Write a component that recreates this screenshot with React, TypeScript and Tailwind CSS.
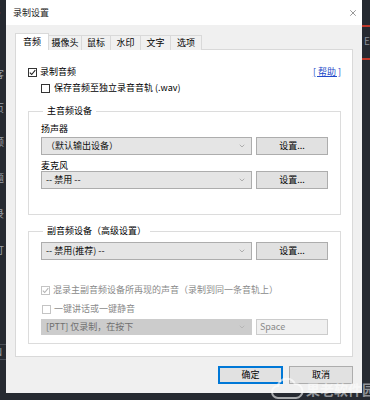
import { ChevronDown, X } from "lucide-react";

const tabs = [
  { label: "音频", w: "w-[34px]" },
  { label: "摄像头", w: "w-[34px]" },
  { label: "鼠标", w: "w-[30px]" },
  { label: "水印", w: "w-[31px]" },
  { label: "文字", w: "w-[31px]" },
  { label: "选项", w: "w-[32px]" },
];

const CheckBox = ({ checked, disabled }: { checked?: boolean; disabled?: boolean }) => (
  <span
    className={`flex h-[9px] w-[9px] shrink-0 items-center justify-center border bg-white ${
      disabled ? "border-[#c4c4c4]" : "border-[#333333]"
    }`}
  >
    {checked && (
      <svg width="7" height="7" viewBox="0 0 7 7">
        <path
          d="M0.8 3.6 L2.7 5.5 L6.3 1.2"
          fill="none"
          stroke={disabled ? "#b5b5b5" : "#222222"}
          strokeWidth="1.1"
        />
      </svg>
    )}
  </span>
);

const Select = ({ value, disabled }: { value: string; disabled?: boolean }) => (
  <div
    className={`flex w-[211px] items-center justify-between border pl-[4px] pr-[5px] ${
      disabled
        ? "h-[16px] border-[#cccccc] bg-[#cccccc] text-[#6f6f6f]"
        : "h-[18px] border-[#adadad] bg-[#e5e5e5] text-[#111]"
    }`}
  >
    <span>{value}</span>
    <ChevronDown size={8} strokeWidth={1.5} className={disabled ? "text-[#a0a0a0]" : "text-[#777]"} />
  </div>
);

const SetButton = () => (
  <div className="flex h-[18px] w-[72px] items-center justify-center border border-[#adadad] bg-[#e1e1e1]">
    设置...
  </div>
);

export default function App() {
  return (
    <div className="flex h-[400px] w-[370px] overflow-hidden bg-[#262a31] font-['Noto_Sans_CJK_SC','Microsoft_YaHei',sans-serif] text-[9px] leading-[12px] text-black">
      {/* left strip of the app behind */}
      <div className="flex w-[6px] shrink-0 flex-col overflow-hidden text-[10px] text-[#9aa0a8]">
        <span className="mt-[4px] -ml-[6px] text-[#d23a3a]">C</span>
        <span className="mt-[52px] -ml-[6px]">客</span>
        <span className="mt-[22px] -ml-[6px]">页</span>
        <span className="mt-[22px] -ml-[6px]">频</span>
        <span className="mt-[24px] -ml-[6px]">题</span>
        <span className="mt-[24px] -ml-[6px]">录</span>
        <span className="mt-[24px] -ml-[6px]">打</span>
        <div className="mt-[88px] h-px w-full bg-[#4a4f57]" />
        <span className="mt-[1px] -ml-[5px]">N</span>
        <div className="mt-[1px] h-px w-full bg-[#4a4f57]" />
      </div>

      {/* dialog */}
      <div className="relative flex h-[393px] w-[356px] shrink-0 flex-col bg-[#f0f0f0]">
        <div className="flex h-[25px] items-center justify-between bg-white pl-[7px] pr-[4px]">
          <span className="text-[#222]">录制设置</span>
          <X size={10} strokeWidth={1.2} className="text-[#333]" />
        </div>

        <div className="flex flex-col px-[9px] pt-[8px]">
          <div className="relative z-10 -mb-px flex h-[17px] items-end">
            {tabs.map((t, i) =>
              i === 0 ? (
                <div
                  key={t.label}
                  className={`${t.w} flex h-[17px] items-start justify-center border border-b-0 border-[#d9d9d9] bg-white pt-[2px]`}
                >
                  {t.label}
                </div>
              ) : (
                <div
                  key={t.label}
                  className={`${t.w} -ml-px flex h-[15px] items-center justify-center border border-b-0 border-[#d9d9d9] bg-[#f0f0f0]`}
                >
                  {t.label}
                </div>
              )
            )}
          </div>

          <div className="flex h-[308px] flex-col border border-[#d9d9d9] bg-white px-[12px]">
            <div className="mt-[16px] flex h-[12px] items-center justify-between">
              <div className="flex items-center gap-[3px]">
                <CheckBox checked />
                <span>录制音频</span>
              </div>
              <span className="mr-[-1px] text-[#2149c9] underline">[ 帮助 ]</span>
            </div>
            <div className="mt-[4px] ml-[13px] flex h-[12px] items-center gap-[4px]">
              <CheckBox />
              <span>保存音频至独立录音音轨 (.wav)</span>
            </div>

            <fieldset className="mt-[11px] border border-[#dcdcdc] px-[12px] pb-[25px]">
              <legend className="ml-[2px] px-[4px] leading-[12px]">主音频设备</legend>
              <div className="mt-[7px] leading-[10px]">扬声器</div>
              <div className="mt-[3px] flex gap-[4px]">
                <Select value="（默认输出设备）" />
                <SetButton />
              </div>
              <div className="mt-[6px] leading-[10px]">麦克风</div>
              <div className="flex gap-[4px]">
                <Select value="-- 禁用 --" />
                <SetButton />
              </div>
            </fieldset>

            <fieldset className="mt-[10px] border border-[#dcdcdc] px-[12px] pb-[8px]">
              <legend className="ml-[2px] px-[4px] leading-[12px]">副音频设备（高级设置）</legend>
              <div className="mt-[5px] flex gap-[4px]">
                <Select value="-- 禁用(推荐) --" />
                <SetButton />
              </div>
              <div className="mt-[24px] flex h-[12px] items-center gap-[3px] text-[#8a8a8a]">
                <CheckBox checked disabled />
                <span>混录主副音频设备所再现的声音（录制到同一条音轨上）</span>
              </div>
              <div className="mt-[7px] ml-px flex h-[12px] items-center gap-[3px] text-[#8a8a8a]">
                <CheckBox disabled />
                <span>一键讲话或一键静音</span>
              </div>
              <div className="mt-[4px] flex gap-[4px]">
                <Select value="[PTT] 仅录制，在按下" disabled />
                <div className="flex h-[16px] w-[72px] items-center border border-[#cccccc] bg-[#f0f0f0] pl-[3px] text-[#8a8a8a]">
                  Space
                </div>
              </div>
            </fieldset>
          </div>

          <div className="mt-[9px] flex justify-end gap-[6px] pr-0">
            <div className="flex h-[18px] w-[65px] items-center justify-center border-2 border-[#0078d7] bg-[#e1e1e1]">
              确定
            </div>
            <div className="flex h-[18px] w-[64px] items-center justify-center border border-[#adadad] bg-[#e1e1e1]">
              取消
            </div>
          </div>
        </div>

        {/* watermark overlay */}
        <div className="pointer-events-none absolute bottom-[-9px] right-[-14px] flex items-center gap-[2px] text-[14px] font-bold leading-[20px] text-white/50">
          <svg width="34" height="26" viewBox="0 0 34 26" className="opacity-60">
            <path
              d="M8 22 a6 6 0 0 1 0-12 a9 9 0 0 1 17-2 a7 7 0 0 1 1 14 Z"
              fill="none"
              stroke="white"
              strokeWidth="2"
            />
          </svg>
          <span>果老软件园</span>
        </div>
      </div>

      {/* right strip */}
      <div className="flex flex-1 flex-col overflow-hidden">
        <div className="mt-[25px] h-[2px] w-full bg-[#c0392b]" />
        <span className="mt-[8px] ml-[2px] text-[10px] leading-[12px] text-[#8a9099]">E</span>
        <div className="mt-[11px] h-[2px] w-full bg-[#c0392b]" />
      </div>
    </div>
  );
}
